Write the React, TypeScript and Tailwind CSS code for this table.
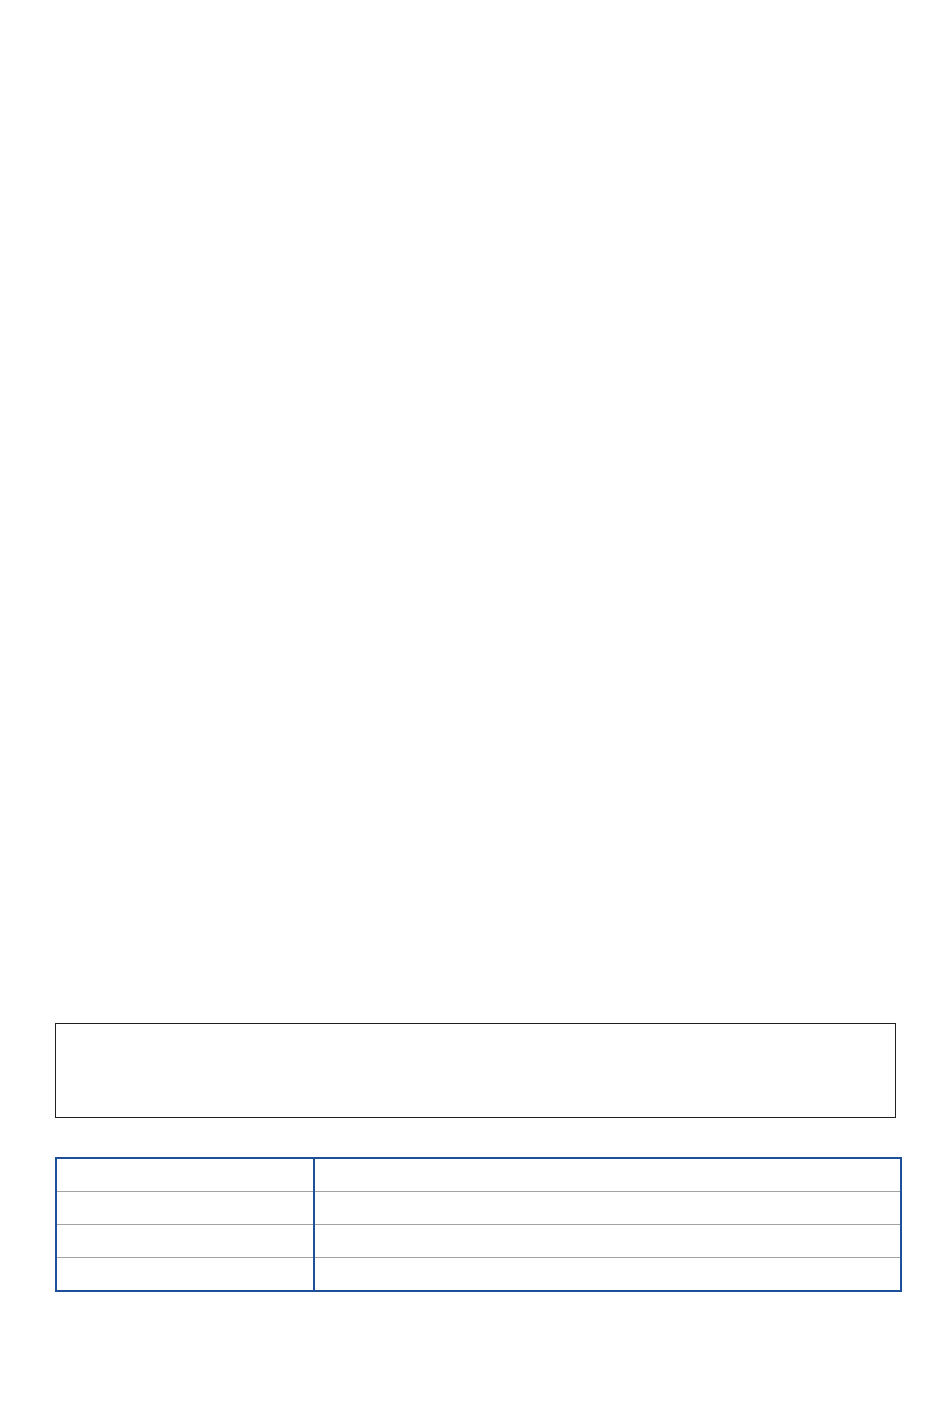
export default function App() {
  const rows = [0, 1, 2, 3];

  const column = (width: string) => (
    <div className={`flex flex-col ${width}`}>
      {rows.map((r) => (
        <div
          key={r}
          className={r < rows.length - 1 ? "h-[33px] border-b border-[#a3a3a3]" : "h-[32px]"}
        />
      ))}
    </div>
  );

  return (
    <div className="min-h-[1408px] w-full bg-white font-['Liberation_Sans',sans-serif]">
      <div className="flex flex-col pl-[55px] pt-[1023px]">
        <div className="h-[95px] w-[841px] border border-[#231f20]" />

        <div className="mt-[39px] flex w-[847px] border-2 border-[#1d4f9b]">
          {column("w-[256px]")}
          <div className="w-[2px] bg-[#1d4f9b]" />
          {column("flex-1")}
        </div>
      </div>
    </div>
  );
}
